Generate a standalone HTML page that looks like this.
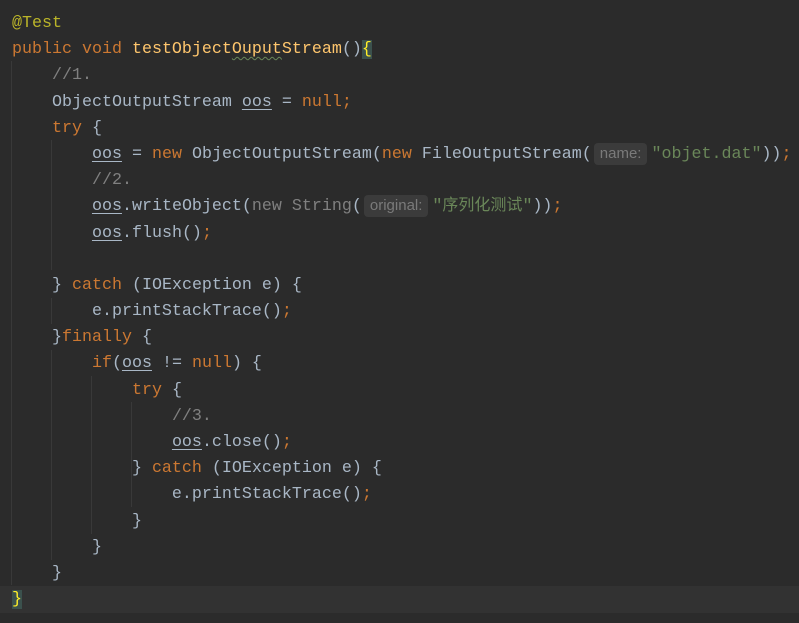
<!DOCTYPE html>
<html><head><meta charset="utf-8"><style>
body{margin:0;background:#2b2b2b;width:799px;height:623px;overflow:hidden;position:relative}
.cur{position:absolute;left:0;top:586px;width:799px;height:27px;background:#323232}
.g{position:absolute;width:1px;background:#393939}
.code{position:absolute;left:12px;top:11px;font-family:"Liberation Mono","Noto Sans CJK SC",monospace;font-size:16.67px;color:#a9b7c6}
.code div{height:26.19px;line-height:26.19px;white-space:pre}
.k{color:#cc7832}.m{color:#ffc66d}.c{color:#808080}.s{color:#6a8759}.a{color:#bbb529}
.u{text-decoration:underline;text-underline-offset:3px}
.w{text-decoration:underline wavy #6a8759;text-decoration-thickness:1px;text-underline-offset:3px}
.b{background:#3b514d;color:#ffef28}
.h{display:inline-block;font-family:"Liberation Sans",sans-serif;font-size:15px;color:#7a7a7a;background:#3b3b3b;border-radius:4px;padding:0 6px;height:22px;line-height:22px;margin:1px 4px 0 2px;vertical-align:top}
.cj{font-family:"Noto Sans CJK SC",sans-serif;font-size:16px;line-height:10px}
</style></head><body>
<div class="cur"></div>
<div class="g" style="left:11px;top:61px;height:524px"></div>
<div class="g" style="left:51px;top:140px;height:130px"></div>
<div class="g" style="left:51px;top:298px;height:26px"></div>
<div class="g" style="left:51px;top:350px;height:210px"></div>
<div class="g" style="left:91px;top:376px;height:158px"></div>
<div class="g" style="left:131px;top:402px;height:105px"></div>
<div class="code"><div><span class="a">@Test</span></div><div><span class="k">public void </span><span class="m">testObject<span class="w">Ouput</span>Stream</span>()<span class="b">{</span></div><div>    <span class="c">//1.</span></div><div>    ObjectOutputStream <span class="u">oos</span> = <span class="k">null;</span></div><div>    <span class="k">try </span>{</div><div>        <span class="u">oos</span> = <span class="k">new </span>ObjectOutputStream(<span class="k">new </span>FileOutputStream(<span class="h">name:</span><span class="s">"objet.dat"</span>))<span class="k">;</span></div><div>        <span class="c">//2.</span></div><div>        <span class="u">oos</span>.writeObject(<span class="c">new String</span>(<span class="h">original:</span><span class="s">"<span class="cj">序列化测试</span>"</span>))<span class="k">;</span></div><div>        <span class="u">oos</span>.flush()<span class="k">;</span></div><div> </div><div>    } <span class="k">catch </span>(IOException e) {</div><div>        e.printStackTrace()<span class="k">;</span></div><div>    }<span class="k">finally </span>{</div><div>        <span class="k">if</span>(<span class="u">oos</span> != <span class="k">null</span>) {</div><div>            <span class="k">try </span>{</div><div>                <span class="c">//3.</span></div><div>                <span class="u">oos</span>.close()<span class="k">;</span></div><div>            } <span class="k">catch </span>(IOException e) {</div><div>                e.printStackTrace()<span class="k">;</span></div><div>            }</div><div>        }</div><div>    }</div><div><span class="b">}</span></div></div>
</body></html>
